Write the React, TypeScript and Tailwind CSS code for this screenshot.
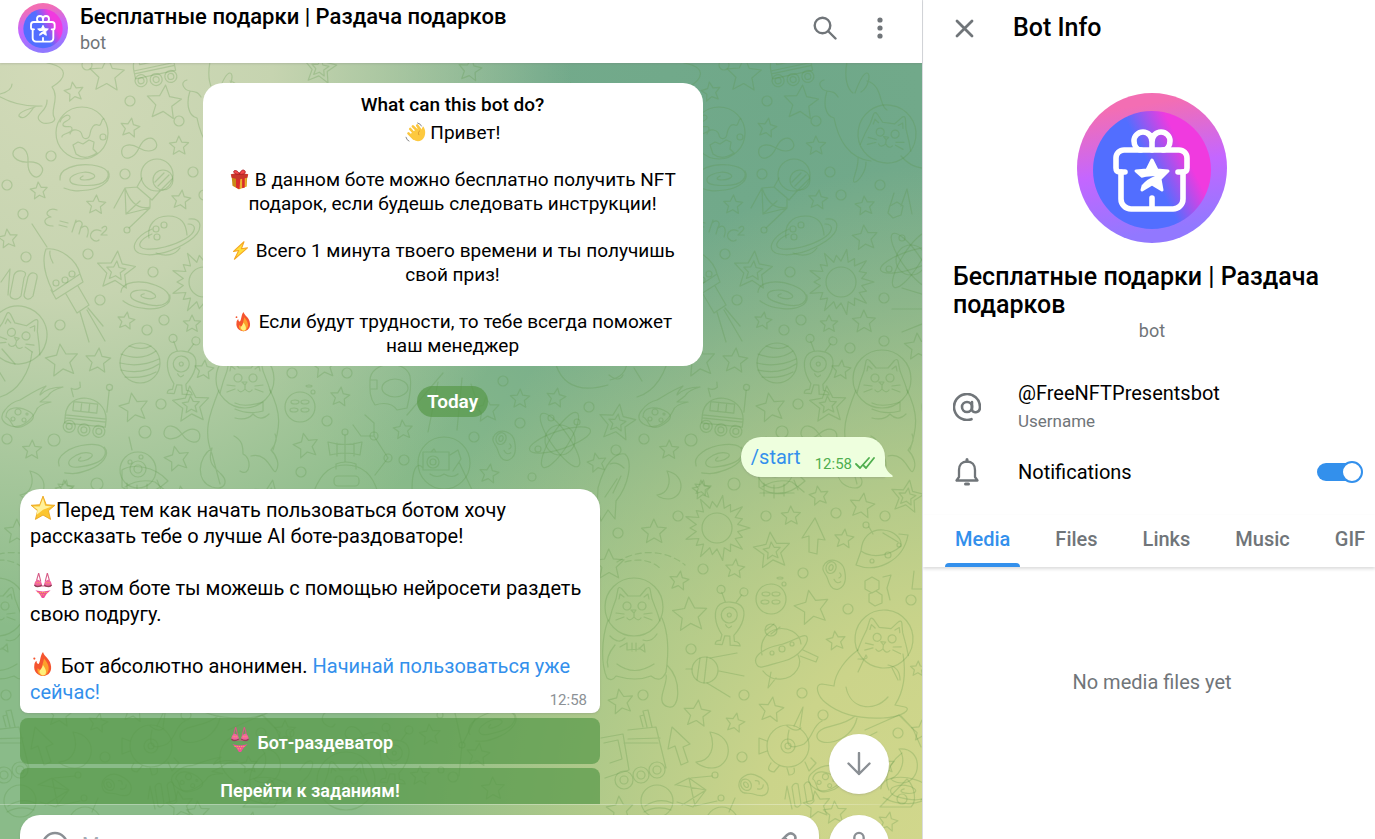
import { useId, useState } from 'react'

type Dot = [number, number, number]

const starDots: Dot[] = [
  [107, 75, 18], [74, 92, 10], [164, 103, 18], [130, 128, 10], [179, 146, 10], [39, 191, 9], [96, 205, 10],
  [181, 200, 10], [8, 239, 10], [116, 271, 20], [116, 271, 10], [126, 321, 9], [192, 324, 9], [62, 361, 17],
  [98, 361, 13], [204, 370, 10], [134, 408, 15], [191, 405, 19], [191, 405, 9], [32, 450, 10], [177, 459, 13],
  [65, 488, 8], [228, 206, 10], [228, 238, 13], [227, 322, 12], [281, 347, 14], [340, 397, 10], [403, 430, 10],
  [306, 446, 13], [489, 474, 10], [487, 410, 13], [520, 399, 10], [556, 398, 10], [617, 423, 19], [617, 423, 9],
  [597, 463, 10], [324, 366, 13], [320, 68, 17], [320, 68, 9], [470, 70, 12], [571, 95, 12],
  [65, 490, 10], [17, 532, 13], [-28, 565, 16], [42, 581, 10], [98, 569, 10], [154, 516, 10], [182, 496, 10],
  [225, 506, 13], [270, 497, 17], [270, 497, 9], [135, 551, 19], [135, 551, 9], [207, 539, 10], [175, 608, 18],
  [53, 615, 18], [199, 641, 10], [-16, 702, 13], [60, 714, 14], [98, 723, 10], [134, 710, 13], [198, 813, 12],
  [251, 822, 10], [-17, 810, 14], [281, 669, 8], [285, 731, 11], [249, 765, 9], [430, 735, 11], [478, 755, 12],
  [420, 776, 10], [493, 789, 12], [180, 805, 14],
]

const ringDots: Dot[] = [
  [130, 101, 5], [179, 121, 5], [51, 156, 5], [125, 174, 5], [193, 172, 5], [7, 185, 5], [23, 214, 5], [26, 257, 5],
  [88, 254, 5], [153, 272, 5], [100, 300, 5], [60, 325, 5], [147, 330, 5], [164, 320, 5], [161, 404, 5],
  [145, 432, 6], [7, 439, 5], [54, 440, 6], [97, 484, 6], [243, 185, 5], [204, 195, 5], [247, 298, 5],
  [247, 341, 5], [213, 348, 5], [292, 373, 5], [347, 373, 5], [327, 421, 5], [301, 472, 5], [404, 460, 5],
  [474, 437, 5], [503, 381, 5], [520, 423, 5], [616, 450, 5], [589, 407, 5], [532, 477, 4], [87, 65, 5],
  [41, 516, 5], [-19, 533, 5], [129, 516, 5], [199, 513, 5], [248, 516, 5], [66, 569, 5],
  [166, 573, 5], [211, 609, 5], [274, 600, 5], [54, 649, 5], [6, 695, 5], [107, 695, 5], [165, 693, 5],
  [186, 715, 5], [105, 757, 5], [261, 733, 5], [265, 799, 5], [453, 777, 5], [290, 733, 4],
]

function starPoints([cx, cy, r]: Dot) {
  const turn = (cx * 7 + cy * 3) % 24
  return Array.from({ length: 10 }, (_, i) => {
    const a = ((i * 36 - 90 + turn - 12) * Math.PI) / 180
    const d = i % 2 ? r * 0.47 : r
    return `${(cx + Math.cos(a) * d).toFixed(1)},${(cy + Math.sin(a) * d).toFixed(1)}`
  }).join(' ')
}

function sunPoints(cx: number, cy: number) {
  return Array.from({ length: 36 }, (_, i) => {
    const a = (i * 10 * Math.PI) / 180
    const d = i % 2 ? 21 : i % 4 ? 27 : 33
    return `${(cx + Math.cos(a) * d).toFixed(1)},${(cy + Math.sin(a) * d).toFixed(1)}`
  }).join(' ')
}

const at = (x: number, y: number, rotate = 0) => `translate(${x} ${y}) rotate(${rotate})`

const Galaxy = ({ x, y, r = 0 }: { x: number; y: number; r?: number }) => (
  <path
    transform={at(x, y, r)}
    d="M-24 3C-26-8-8-14 8-12S27-3 22 3 4 9-6 8-16 1-10-2 4-6 9-3 7 3 1 3-5 1-1-1M24-6C29 3 18 11 4 13S-14 13-20 11"
  />
)

const Infinity = ({ x, y, r = 0 }: { x: number; y: number; r?: number }) => (
  <path transform={at(x, y, r)} d="M0 0C8-9 17-8 18 0S8 9 0 0-17-8-18 0-8 9 0 0Z" />
)

const Alien = ({ x, y }: { x: number; y: number }) => (
  <g transform={at(x, y, 4)}>
    <path d="M-5 26h-7q0-4 5-4l1-6C-14 6-17-8-10-14c5-4 16-4 21 0 7 6 3 20-5 30l1 6q5 0 6 4H3l-1-9h-5zM-5-17l-4-9M6-17l5-8M-3 6q3 5 6 1" />
    <circle cx="-10" cy="-29" r="4" />
    <circle cx="13" cy="-28" r="4" />
    <circle cy="-4" r="8" />
    <circle r="2" cy="-4" />
  </g>
)

const Potato = ({ x, y, r = 0 }: { x: number; y: number; r?: number }) => (
  <g transform={at(x, y, r)}>
    <path d="M-12-7C-8-16 4-14 8-8S16 6 10 12-2 10-5 6-15 1-12-7ZM5-3q4 2 1 5M2 5q4 4 7 0" />
    <ellipse cx="-5" cy="-5" rx="5" ry="6" />
    <ellipse cx="-5" cy="-5" rx="2" ry="3" />
  </g>
)

const Cookie = ({ x, y }: { x: number; y: number }) => (
  <g transform={at(x, y)}>
    <circle r="15" />
    <ellipse cx="-5" cy="-5" rx="4" ry="2" />
    <ellipse cx="5" cy="-5" rx="4" ry="2" />
    <ellipse cx="-6" cy="3" rx="4" ry="2" />
    <ellipse cx="5" cy="3" rx="4" ry="2" />
    <ellipse cx="9" cy="-21" rx="3" ry="1" />
    <circle cx="13" cy="-15" r="2" />
  </g>
)

const CatFace = ({ x, y, r = 0 }: { x: number; y: number; r?: number }) => (
  <g transform={at(x, y, r)}>
    <circle r="29" />
    <path d="M-25 14C-22 2-20-3-18-8l2-10q1-3 4 0l6 7h12l6-7q3-3 4 0l2 10C20-3 23 4 26 14M-15-8l1-5 4 3M15-8l-1-5-4 3M-3 3h5l-2 3zM0 6v4q-4 5-7 1M0 10q4 5 7 1M-10 7l-8-1M-10 10l-8 3M10 7l8-1M10 10l8 3" />
    <circle cx="-7" cy="-1" r="4" />
    <circle cx="8" cy="-1" r="4" />
  </g>
)

const Rover = ({ x, y, r = 0 }: { x: number; y: number; r?: number }) => (
  <g transform={at(x, y, r)}>
    <path d="M-20 7C-20-18 18-18 21 7v8h-41zM-20 7h41M-20 10h41M-13-7h24v9h-24zM-5-7v9M3-7v9M21 0v-22M-14-12l-3-8q5 2 9-2l-1-5" />
    <circle cx="21" cy="-25" r="3" />
    <circle cx="-15" cy="18" r="6" /><circle cx="-15" cy="18" r="3" />
    <circle cx="0" cy="20" r="6" /><circle cx="0" cy="20" r="3" />
    <circle cx="15" cy="20" r="6" /><circle cx="15" cy="20" r="3" />
  </g>
)

const Comet = ({ x, y, r = 0 }: { x: number; y: number; r?: number }) => (
  <g transform={at(x, y, r)}>
    <path d="M-15-4Q-9-12 0-14C10-20 16-24 26-28q-5 5-6 9 8-8 23-8-12 3-15 9l-8 6h11q-14 3-15 9C10 8 0 15-9 12S-21 3-15-4Z" />
    <path d="M-14 3q0-8 8-9T10-2 7 10-8 10-14 3Z" />
    <circle cx="-2" cy="-2" r="3" /><circle cx="-7" cy="5" r="2" /><circle cx="4" cy="6" r="2" /><circle cx="7" cy="0" r="1" />
  </g>
)

const Atom = ({ x, y }: { x: number; y: number }) => (
  <g transform={at(x, y)}>
    <circle r="15" />
    <ellipse rx="32" ry="9" transform="rotate(-18)" />
    <ellipse rx="32" ry="9" transform="rotate(55)" />
    <ellipse rx="32" ry="9" transform="rotate(122)" />
    <circle cx="-9" cy="-22" r="3" /><circle cx="17" cy="-18" r="3" /><circle cx="-22" cy="9" r="3" />
  </g>
)

function Doodles() {
  return (
    <g>
      {starDots.map((s, i) => <polygon key={i} points={starPoints(s)} />)}
      {ringDots.map(([cx, cy, r], i) => <circle key={i} cx={cx} cy={cy} r={r} />)}

      {/* globe */}
      <circle cx="82" cy="133" r="26" />
      <path d="M60 122c2-6 9-9 10-5s-8 4-7 8 9-1 9 4-11 4-10 8M70 134c2-7 11-4 12 1s7 5 8-1 4-11 8-9 3-7 6-6M73 145l5-3 5 2 6-4 5 2-1 7 4 4q-12 8-21 1z" />
      <circle cx="103" cy="137" r="3" />
      <Infinity x={28} y={162} r={45} />
      <Infinity x={139} y={148} r={-18} />
      <Infinity x={182} y={434} r={8} />
      <Galaxy x={84} y={177} />
      <Galaxy x={145} y={295} r={14} />
      <Galaxy x={82} y={458} r={-12} />
      <Galaxy x={268} y={790} r={10} />

      {/* long-tailed cat floating past the top edge */}
      <path d="M-8 92C8 103 25 107 42 106M0 94q12-3 12-10M47 63c22 4 20 15 5 24 8 10-2 24 2 30s-11 9-15 3 9-9 8-20M35 107q-17 5-16 9 5 6 15-9" />
      <path d="M210 62c-3 15 0 27 6 31M218 93c4-11 8-20 12-20s2 14-6 19M230 81c16 4 12 26 20 29M187 80c-8 2-3 10 3 11 8 1 8 2 11 6M190 91c-4 12-2 25 7 27 4 21 15 41 37 43M221 157c1 12-7 24-4 25s12-9 12-20M264 156c10 12 23 14 35 11" />
      <CatFace x={250} y={134} r={8} />

      {/* satellite */}
      <circle cx="157" cy="175" r="16" />
      <circle cx="163" cy="180" r="10" />
      <path d="M155 182l9-9M158 186l11-11M162 189l10-10M142 178l-5 9 15 13 8-9M137 187l-12 1-11 20M125 188l1 26 24-6M150 199v8q-17 4-25-19M126 214l14-13M150 208l-21 20" />
      <circle cx="127" cy="230" r="3" />

      {/* ringed planet */}
      <path d="M149 238c-2-12 5-22 19-22s18 8 19 19M156 253c10 4 19 2 24-5" />
      <path d="M152 229c-18 8-24 22-10 25s32-3 47-13 14-24 0-22M152 234c-14 6-16 14-6 15s27-3 39-10 12-15 3-15" />
      <circle cx="156" cy="229" r="3" /><circle cx="164" cy="225" r="3" /><circle cx="157" cy="237" r="3" />

      {/* formula */}
      <path d="M57 210c-9-3-14 5-6 7-9 1-8 9 2 9M60 221l8 2M59 225l8 2M72 232l4-12M75 223c5-5 9 0 6 4l-2 7M81 228c6-5 9 1 6 9M101 231c-8-4-13 4-9 8s7 1 7 1M102 228c4-4 7 0 2 4l-3 3h6" />

      {/* rocket */}
      <path d="M32 224l15 23M46 249c-5 13 1 31 7 43l27-18c-3-14-20-27-34-25ZM53 263q-4-7-3-12M51 290l5 9 27-17-3-8M66 294l11 19 12-8-11-19M80 312l9 30M87 310l18 31M88 308l15 18" />
      <circle cx="56" cy="283" r="3" /><circle cx="65" cy="280" r="3" /><circle cx="72" cy="274" r="3" />

      <path d="M1 282l9-13-2 26M14 275q2-5 8-4t2 7l-3 18q-3 4-7 3t-4-4zM28 277q2-5 6-4t3 5l-4 18q-3 4-6 3t-3-4z" />

      {/* peeking cat */}
      <CatFace x={18} y={335} r={14} />
      <path d="M32 352c-2 20-14 40-32 45M2 349l13 15M-3 368l8 13" />
      <Comet x={20} y={414} />
      <Rover x={86} y={410} r={6} />
      <Rover x={152} y={60} r={-12} />

      {/* striped planet */}
      <circle cx="140" cy="363" r="20" />
      <path d="M129 346q13 5 22 0M121 354q20 8 35-3M120 363q20 5 39-4M121 370q22 5 38-6M125 377q18 2 31-5" />
      <Alien x={181} y={368} />
      <circle cx="204" cy="282" r="15" />
      <polygon points={sunPoints(204, 282)} />
      <Atom x={274} y={260} />
      <path d="M257 193l-4 13 7-4 6 4-2 9-8 3-5-5 2-8M264 206l6-17 5 25M265 288l33 10M255 309h40M265 332l30-12" />

      {/* grumpy cat */}
      <CatFace x={245} y={379} />
      <path d="M219 390c-10 25-16 42-7 64l8 30M270 390c12 24 10 38 3 60M235 403q10 5 28-1v9q-15 4-28-2M235 418q12 3 18-4 8 8 16 0M234 436c8 4 9 10 9 18 9 3 8 24-3 17M251 456c17-5 22 20 25 15 4-6 1-15-5-21 6-8 6-12 4-16M212 448c-14 9-17 33 0 39 14 4 16-6 9-13s-14-11-9-26" />
      <Cookie x={300} y={407} />

      {/* helmet */}
      <path d="M370 380c1-19 35-21 40-4 2 10 0 20-3 32l-10 2c-4-6-12-8-22-5-6-8-5-16-5-25ZM370 380h7v9h-7" />
      <ellipse cx="395" cy="388" rx="13" ry="9" />
      <path d="M443 373l-36 42M438 382l-10 50M462 378l-5 52M471 384l10 30" />
      <Potato x={504} y={445} r={20} />
      <Atom x={560} y={440} />

      {/* bathyscaphe and chain */}
      <path d="M314 491c8-20 18-26 32-26 16 0 27 10 32 28M328 442q17 5 34 0l-2 13q-15-4-30 0zM337 443v13M345 443v13M354 443v13M345 435v27M336 469v-5q10-4 20 0v5M353 425l8 11h13v-13l-9-8M374 436l14 22-13 17" />
      <rect x="334" y="476" width="25" height="10" rx="4" />
      <circle cx="345" cy="432" r="3" /><circle cx="374" cy="436" r="4" /><circle cx="388" cy="458" r="4" />
      <circle cx="444" cy="463" r="26" />
      <path d="M423 452h26v18h-26zM450 455l8-5 3 9-8 12M431 452l3-3 2 3M412 490c0-18 4-30 11-22M473 492l-14-30M430 474q7 5 14 0 8 5 14 0" />
      <circle cx="433" cy="462" r="6" /><circle cx="433" cy="462" r="3" />
      <path d="M556 365c7 20 24 28 52 20M610 380q15-3 17-17M609 375q10 8 14 0" />

      {/* bear astronaut */}
      <circle cx="138" cy="470" r="18" />
      <circle cx="138" cy="469" r="8" /><circle cx="138" cy="469" r="4" /><circle cx="130" cy="462" r="2" /><circle cx="141" cy="457" r="2" />
      <path d="M132 450l-3-13M125 487q14-9 30-5l12 10M123 493h34" />

      {/* shuttle */}
      <path d="M-39 488c7-26 18-36 27-34 8 7 4 31-9 47l-1 18-7-9-7 11-4-15zM-27 464q7-3 14 4M-24 493l8-17M-32 497l12-18" />
      <path d="M30 471c20 4 17 28 1 28-8 0-11-4-11-4 11-1 15-13 10-24Z" />
      <circle cx="80" cy="528" r="15" />
      <polygon points={sunPoints(80, 528)} />
      <path d="M122 470c9-6 32-5 46 11q-24 22-46 6zM127 483v13M137 485v13M147 484v12M157 480l4 10" />
      <path d="M172 552v-16l-7 2 13-20 10 22-7-1-1 15z" />

      {/* flying saucer */}
      <path d="M224 551c1-14 10-22 22-21s19 9 18 16c-9 8-27 14-40 5ZM224 551l-5 14c20 8 47-3 52-30l-9-1M246 533l15 9M232 527l4 7" />
      <circle cx="229" cy="525" r="3" /><circle cx="235" cy="561" r="2" /><circle cx="251" cy="555" r="3" /><circle cx="262" cy="545" r="2" />
      <Potato x={197} y={574} r={20} />
      <path d="M228 581l7-4 7 4v8l-7 4-7-4zM232 594l7-3 6 4v8l-7 3-6-4zM246 577l8-2-4 13 3 12M277 571l-2 18h18" />
      <Cookie x={134} y={599} />
      <Alien x={92} y={619} />

      {/* cat with a fish */}
      <path strokeDasharray="6 4" d="M-20 562c22-14 50-12 68 3M-12 562q22-6 36 7" />
      <CatFace x={-3} y={607} />
      <path d="M-29 620c-7 20-7 45-1 58q5 4 9-2 20 6 35 0 10 8 15-4c3-20 2-40-4-54M-22 645q-10 12-7 22M-20 664q17 13 37 0M-27 636q9 9 15 2M20 634q-6 9-14 6M-17 647l7-4v7l12-1 5-5 1 8-6-4M-5 643v8M-1 643v8M30 665c16 16 12 45 2 42-16-3 0-24-3-32" />
      <circle cx="68" cy="670" r="13" />
      <path d="M63 658l-3 22M70 657l-3 26M73 658l27-5M82 671l25 5M70 683l23 14M55 669h-6" />

      {/* space station */}
      <path d="M125 655c-3-14 5-24 15-26s23 3 24 15M120 665c-6-9 8-17 22-20s26-13 28-8-7 20-23 24-25 9-27 4ZM126 671c9 12 27 10 34-1 4-6 3-11 1-15M166 650l15 7-2 5-16-6M134 672l-3 16 8-10M129 630l8-6M134 634l9-7" />
      <circle cx="134" cy="630" r="6" /><circle cx="135" cy="653" r="2" /><circle cx="145" cy="649" r="3" /><circle cx="155" cy="644" r="2" />

      {/* dancing cat */}
      <CatFace x={247} y={639} r={6} />
      <path d="M221 650c-11 8-23 22-24 36l-12-2c-8 0-5 12 4 19 16 13 37 16 57 15s29-9 22-11l-10-2q13-20 8-51M209 687c4 22 28 26 42 10M251 665q12 2 12 15M255 668l6 12M221 659q12 1 8-4l-8 17M218 716c-13 12-35 8-38 19-2 13 34 10 40-17" />

      {/* truck */}
      <path d="M-36 738l22-4 6 36-24 8M-9 730l28-3 10 41M-9 739l32-1M-13 743h34M-33 743l14-3 4 19-12 4M6 727l-3-11 4-1 3 12M10 727l-4-16 5-1 4 17" />
      <circle cx="-13" cy="780" r="9" /><circle cx="-13" cy="780" r="4" /><circle cx="4" cy="775" r="8" /><circle cx="4" cy="775" r="4" /><circle cx="20" cy="770" r="8" /><circle cx="20" cy="770" r="4" />
      <path d="M44 765l-6-19-7 3 4-22 18 17-7 3 5 15z" />
      <path d="M73 732c27 4 21 36 2 36-11 0-16-6-16-6 15-1 20-15 14-30Z" />
      <path d="M262 749c25-2 23 34 3 34-8 0-11-4-11-4 12-6 15-21 8-30Z" />

      {/* submarine */}
      <circle cx="151" cy="746" r="21" />
      <circle cx="151" cy="746" r="7" /><circle cx="151" cy="746" r="3" />
      <path d="M130 741l-8-3v16l8-3M157 726l9-19-3 20M150 726q9 7 14 2M134 763q-6 8 3 9l5-6M150 768l2 7q7 0 5-7M168 762l4 9 7-8-5-5" />
      <Potato x={116} y={786} r={-35} />
      <path d="M148 799l2-13 5 23M155 787q2-5 6-3l3 20q-3 5-6 2zM167 785q3-5 6-2l4 18q-3 5-7 2z" />
      <circle cx="20" cy="801" r="16" />
      <path d="M8 806q14-9 27-3M7 812q13-7 27-2M38 785l14-7 17 12-13 17-16-5M52 778l6 28M40 785l29 5-24 15M54 778l21-2M58 806l22-5" />
      <circle cx="78" cy="775" r="3" /><circle cx="84" cy="798" r="3" />
      <circle cx="85" cy="823" r="16" />
      <path d="M92 812l6-14" />

      {/* middle part seen through the keyboard */}
      <path d="M152 730c-4 17 1 20 15 14 10-8 8-18 18-23M228 730l34-15 12 12M284 747l-8-18-12-13M331 712c-8-2-12 8-5 13s9-1 9-1" />
      <path d="M240 732c-27 12-25 36-5 50M265 753c-17 13-17 30-13 37" />
      <Comet x={190} y={779} r={12} />
      <CatFace x={346} y={781} />
      <Alien x={394} y={757} />
      <Infinity x={363} y={736} r={15} />
      <path d="M455 713l7 32 13-26M459 776l3-31M300 770c8-14 19-12 8 6L284 800" />
      <Galaxy x={492} y={725} r={-16} />
      <path d="M243 807l27-28c8 8 10 22 4 28z" />
      <circle cx="440" cy="715" r="3" /><circle cx="441" cy="770" r="3" /><circle cx="462" cy="745" r="3" />
    </g>
  )
}

function Wallpaper() {
  return (
    <div
      aria-hidden
      className="absolute inset-0 overflow-hidden bg-[#8abb89] bg-[radial-gradient(ellipse_56%_68%_at_6%_0%,#d2dab8_0%,#c6d4b0_42%,#c6d4b000_100%),radial-gradient(ellipse_66%_86%_at_104%_98%,#d3d88c_0%,#cbd48a_34%,#cbd48a00_100%),radial-gradient(ellipse_66%_66%_at_86%_4%,#6fa889_0%,#73aa8b_42%,#73aa8b00_100%)]"
    >
      <svg className="size-full" fill="none" stroke="#5a9444" strokeOpacity="0.26" strokeWidth="1.2" strokeLinejoin="round" strokeLinecap="round">
        <g transform="translate(0 -63)"><Doodles /></g>
        <g transform="translate(637 -63)"><Doodles /></g>
      </svg>
    </div>
  )
}

function GiftAvatar({ className }: { className: string }) {
  const id = useId()
  return (
    <svg viewBox="0 0 150 150" className={className} role="img" aria-label="Avatar">
      <defs>
        <linearGradient id={`${id}a`} x1="60" y1="0" x2="85" y2="150" gradientUnits="userSpaceOnUse">
          <stop offset="0.08" stopColor="#f36eb3" />
          <stop offset="0.5" stopColor="#c466ff" />
          <stop offset="0.92" stopColor="#9278ff" />
        </linearGradient>
        <linearGradient id={`${id}b`} x1="75" y1="79" x2="109" y2="62" gradientUnits="userSpaceOnUse">
          <stop stopColor="#526eff" />
          <stop offset="1" stopColor="#f03adf" />
        </linearGradient>
      </defs>
      <circle cx="75" cy="75" r="75" fill={`url(#${id}a)`} />
      <circle cx="75" cy="77" r="59" fill={`url(#${id}b)`} />
      <g fill="none" stroke="#fff" strokeWidth="5.6" strokeLinecap="round" strokeLinejoin="round">
        <path d="M48 79H43Q39 79 39 75V65a8 8 0 0 1 8-8h55a8 8 0 0 1 8 8v10q0 4-4 4h-5" />
        <path d="M44 79v27a10 10 0 0 0 10 10h42a10 10 0 0 0 10-10V79M75 105v11" />
        <path d="M75 57v-8c0-6-4-10-9-10s-9 4-9 9 3 9 7 9M75 57v-8c0-6 4-10 9-10s9 4 9 9-3 9-7 9" />
      </g>
      <path d="M75 67l5 10 11 1-8 8 2 11-10-6-10 6 3-11-9-8 11-1z" fill="#fff" stroke="#fff" strokeWidth="3" strokeLinejoin="round" />
      <path d="M60 86q9-3 18-3-8 3-13 9l-2-4z" fill="#526eff" />
    </svg>
  )
}

type EmojiName = 'wave' | 'gift' | 'zap' | 'fire' | 'star' | 'bikini'

const emojiArt: Record<EmojiName, React.ReactNode> = {
  wave: (
    <>
      <path d="M6 8l7 8M4 13l6 6M9 5l8 8M14 4l5 7" stroke="#fbc63d" strokeWidth="3" strokeLinecap="round" />
      <path d="M6 14l8-7 4 3c2-2 1-4 3-5 2 3 3 7 1 12-3 6-9 6-12 3z" fill="#fdc93f" />
      <path d="M17 10c-2 1-2 3-1 5" stroke="#d9942a" fill="none" />
      <path d="M14 1q4 1 5 4M1 17q1 4 4 5" stroke="#777" fill="none" />
    </>
  ),
  gift: (
    <>
      <path d="M3 8l18-1-1 13-9 3-7-4z" fill="#c98a17" />
      <path d="M11 10l9-2v12l-9 3z" fill="#eab02c" />
      <path d="M8 9l5 1-1 13-4-2zM15 9h3v12l-3 1z" fill="#d92b2b" />
      <path d="M2 6l10-2 10 2-1 4-10 2-8-2z" fill="#c9362c" />
      <path d="M12 6C7 7 4 3 6 2s5 1 6 4c1-4 4-6 6-4s-1 5-6 4z" fill="#f2494a" stroke="#a81c23" />
    </>
  ),
  zap: <path d="M16 2L4 13l6-1-5 10L20 9l-7 1z" fill="#ffe03a" stroke="#f5a623" strokeWidth="1.2" strokeLinejoin="round" />,
  fire: (
    <>
      <path d="M12 1c1 4 6 6 7 11 2 7-2 11-7 11S3 19 4 13c0-2 1-3 2-4 0 2 1 3 2 3 2-3 1-7 4-11z" fill="#f5552f" />
      <path d="M13 7c3 4 5 7 4 11-1 3-3 5-5 5s-6-2-5-7l3 2c1-3 2-7 3-11z" fill="#fda02b" />
      <path d="M12 13c2 3 4 6 2 9-2 1-4 0-5-2s2-3 3-7z" fill="#fff07c" />
      <circle cx="4" cy="7" r="1" fill="#f5552f" />
    </>
  ),
  star: (
    <>
      <path d="M12 1l3 8 8 .500-6 5 2 8-7-4-7 4 2-8-6-5L9 9z" fill="#fbc530" stroke="#e9a41d" strokeWidth="0.8" strokeLinejoin="round" />
      <path d="M12 3l2 7 6 .500-8 3-6 5 1-5-4-3h6z" fill="#fff19b" />
    </>
  ),
  bikini: (
    <>
      <path d="M8 0L6 7M8 0l2 8M16 0l-2 8M16 0l2 7M9 12h6" stroke="#d65b86" fill="none" />
      <path d="M7 6c3 1 4 3 4 5s-6 3-7 0c0-2 1-4 3-5zM17 6c-3 1-4 3-4 5s6 3 7 0c0-2-1-4-3-5z" fill="#f2639f" />
      <path d="M4 11q3 3 7 0M13 11q4 3 7 0" stroke="#8f4458" strokeWidth="1.2" fill="none" />
      <path d="M5 16q7 2 14 0-4 3-6 7h-2q-2-4-6-7z" fill="#ef519a" />
      <path d="M7 18h10M10 20h4M6 9h3M15 9h3" stroke="#f6c04a" strokeDasharray="1 1" />
    </>
  ),
}

const Emoji = ({ name, className = 'size-[21px]' }: { name: EmojiName; className?: string }) => (
  <svg viewBox="0 0 24 24" role="img" aria-label={name} className={`-my-1 inline-block align-[0px] ${className}`}>
    {emojiArt[name]}
  </svg>
)

function ChatHeader() {
  return (
    <header className="relative z-10 flex h-[63px] shrink-0 items-center bg-white pl-[18px] pr-[22px] shadow-[0_1px_2px_#72727240]">
      <GiftAvatar className="-mt-2 mr-3 size-[50px] shrink-0" />
      <div className="-mt-1.5 min-w-0 flex-1">
        <h1 className="truncate text-[22px] leading-7 font-medium text-black">Бесплатные подарки | Раздача подарков</h1>
        <p className="text-lg leading-6 text-[#707579]">bot</p>
      </div>
      <div className="-mt-2 flex items-center gap-[15px] text-[#707579]">
        <button aria-label="Search" className="flex size-10 items-center justify-center">
          <svg viewBox="0 0 24 24" className="size-6" fill="none" stroke="currentColor" strokeWidth="2.400" strokeLinecap="round">
            <circle cx="9.500" cy="9.500" r="7.800" />
            <path d="M15.500 15.500l7 7" />
          </svg>
        </button>
        <button aria-label="More actions" className="flex size-10 items-center justify-center">
          <svg viewBox="0 0 24 24" className="size-6" fill="currentColor">
            <circle cx="12" cy="4" r="2.600" />
            <circle cx="12" cy="12" r="2.600" />
            <circle cx="12" cy="20" r="2.600" />
          </svg>
        </button>
      </div>
    </header>
  )
}

function BotIntro() {
  return (
    <section className="mx-auto w-[500px] rounded-[20px] bg-white px-5 pt-[10px] pb-2 text-center text-[19px] leading-6 text-black">
      <h2 className="mb-1 font-medium">What can this bot do?</h2>
      <p><Emoji name="wave" /> Привет!</p>
      <p className="mt-[23px]"><Emoji name="gift" /> В данном боте можно бесплатно получить NFT<br />подарок, если будешь следовать инструкции!</p>
      <p className="mt-[23px]"><Emoji name="zap" /> Всего 1 минута твоего времени и ты получишь<br />свой приз!</p>
      <p className="mt-[23px]"><Emoji name="fire" /> Если будут трудности, то тебе всегда поможет<br />наш менеджер</p>
    </section>
  )
}

function Composer() {
  return (
    <footer className="relative flex shrink-0 gap-[10px] pt-[11px] pr-[33px] pb-5 pl-5">
      <div className="absolute inset-x-0 top-0 h-px bg-linear-to-r from-white/30 via-white/30 via-90% to-transparent" />
      <div className="flex h-[60px] flex-1 items-center rounded-[20px] bg-white px-5 text-[#8a8f94] shadow-[0_1px_2px_#72727240]">
        <button aria-label="Emoji" className="size-[30px]">
          <svg viewBox="0 0 30 30" fill="none" stroke="currentColor" strokeWidth="2.500" strokeLinecap="round">
            <circle cx="15" cy="15" r="12" />
            <path d="M10 18q5 5 10 0M11 11v1M19 11v1" />
          </svg>
        </button>
        <input aria-label="Message" placeholder="Message" className="mx-3 min-w-0 flex-1 text-xl outline-none placeholder:text-[#a2acb4]" />
        <button aria-label="Attach" className="size-[30px]">
          <svg viewBox="0 0 30 30" fill="none" stroke="currentColor" strokeWidth="2.500" strokeLinecap="round">
            <path d="M9 14l9-9c5-4 11 1 7 6L14 24c-4 4-10-1-6-6l9-9" />
          </svg>
        </button>
      </div>
      <button aria-label="Record voice" className="flex size-[60px] items-center justify-center rounded-full bg-white text-[#8a8f94] shadow-[0_1px_2px_#72727240]">
        <svg viewBox="0 0 30 30" className="size-7" fill="none" stroke="currentColor" strokeWidth="2.500" strokeLinecap="round">
          <rect x="10" y="2" width="10" height="16" rx="5" />
          <path d="M6 14c0 12 18 12 18 0M15 23v5" />
        </svg>
      </button>
    </footer>
  )
}

function Chat() {
  return (
    <main className="relative flex h-[calc(100vh+56px)] min-w-0 flex-1 flex-col">
      <ChatHeader />
      <div className="relative flex min-h-0 flex-1 flex-col">
        <Wallpaper />
        <div className="relative flex min-h-0 flex-1 flex-col overflow-hidden pt-5 pr-[37px] pl-5">
          <BotIntro />
          <time className="mx-auto mt-[20px] shrink-0 rounded-full bg-[#579849b3] px-[10px] py-[3px] text-[19px] leading-[25px] font-semibold text-white">Today</time>

          <div className="relative mt-5 ml-auto flex h-10 shrink-0 items-center rounded-[20px] rounded-br-none bg-[#eeffde] pr-[10px] pl-[10px] shadow-[0_1px_2px_#72727240]">
            <svg viewBox="0 0 9 20" className="absolute right-[-8px] bottom-0 h-5 w-[9px]" fill="#eeffde">
              <path d="M0 0c0 8 2 14 8 18 1 1 1 2 0 2H0z" />
            </svg>
            <a href="#start" className="mr-[14px] text-xl text-[#3390ec]">/start</a>
            <span className="mt-[13px] text-[15px] leading-5 text-[#4fae4e]">12:58</span>
            <svg viewBox="0 0 20 12" className="mt-3 ml-[3px] h-3 w-5" fill="none" stroke="#4fae4e" strokeWidth="1.800" strokeLinecap="round" strokeLinejoin="round" aria-label="Read" role="img">
              <path d="M1 7l4 4 9-10M9 9l2 2 8-10" />
            </svg>
          </div>

          <article className="relative mt-3 w-[580px] shrink-0 rounded-[20px] rounded-b-lg bg-white px-[10px] py-2 text-[20px] leading-[26px] text-black shadow-[0_1px_2px_#72727240]">
            <p><Emoji name="star" className="size-[26px]" />Перед тем как начать пользоваться ботом хочу<br />рассказать тебе о лучше AI боте-раздоваторе!</p>
            <p className="mt-[26px]"><Emoji name="bikini" className="size-[26px]" /> В этом боте ты можешь с помощью нейросети раздеть<br />свою подругу.</p>
            <p className="mt-[26px]">
              <Emoji name="fire" className="size-[26px]" /> Бот абсолютно анонимен.{' '}
              <a href="#more" className="text-[#3390ec]">Начинай пользоваться уже<br />сейчас!</a>
            </p>
            <time className="absolute right-[13px] bottom-1 text-[15px] leading-[18px] text-[#8c9196]">12:58</time>
          </article>
          <div className="mt-[5px] flex w-[580px] shrink-0 flex-col gap-1 text-lg font-semibold text-white">
            <button className="h-[46px] rounded-lg bg-[#579849b3] pt-1"><Emoji name="bikini" className="size-[26px]" /> Бот-раздеватор</button>
            <button className="h-[46px] rounded-lg bg-[#579849b3]">Перейти к заданиям!</button>
          </div>
        </div>
        <Composer />
        <button aria-label="Go to bottom" className="absolute right-[33px] bottom-[101px] flex size-[60px] items-center justify-center rounded-full bg-white text-[#8a8f94] shadow-[0_1px_2px_#72727240]">
          <svg viewBox="0 0 24 24" className="size-6" fill="none" stroke="currentColor" strokeWidth="2.400" strokeLinecap="round" strokeLinejoin="round">
            <path d="M12 1v21M1.500 11.500L12 22l10.500-10.500" />
          </svg>
        </button>
      </div>
    </main>
  )
}

const tabs = ['Media', 'Files', 'Links', 'Music', 'GIF']

function BotInfo() {
  const [tab, setTab] = useState('Media')
  const [notify, setNotify] = useState(true)
  return (
    <aside className="flex w-[453px] shrink-0 flex-col overflow-hidden border-l border-[#dadce0] bg-white">
      <div className="flex h-14 shrink-0 items-center pl-[31px]">
        <button aria-label="Close" className="mr-[38px] size-[21px] text-[#707579]">
          <svg viewBox="0 0 21 21" fill="none" stroke="currentColor" strokeWidth="2.800" strokeLinecap="round">
            <path d="M3 3l15 15M18 3L3 18" />
          </svg>
        </button>
        <h2 className="text-[25px] leading-8 font-medium text-black">Bot Info</h2>
      </div>

      <div className="pt-[37px] pr-6 pl-[30px]">
        <GiftAvatar className="mx-auto size-[150px]" />
        <h3 className="mt-5 text-[25px] leading-7 font-medium text-black">Бесплатные подарки | Раздача подарков</h3>
        <p className="text-center text-lg leading-6 text-[#707579]">bot</p>
      </div>

      <div className="mt-9 flex items-center pr-3 pl-[30px]">
        <svg viewBox="0 0 28 28" className="mr-[37px] size-7" fill="none" stroke="#707579" strokeWidth="2.600" strokeLinecap="round">
          <circle cx="14" cy="14" r="5" />
          <path d="M19 9v7.500c0 4 8 4 8-2.500A13 13 0 1 0 18.500 26.200" />
        </svg>
        <div>
          <p className="text-xl leading-7 text-black">@FreeNFTPresentsbot</p>
          <p className="text-[17px] leading-7 text-[#707579]">Username</p>
        </div>
      </div>

      <label className="mt-[23px] flex items-center pr-3 pl-[30px]">
        <svg viewBox="0 0 28 28" className="mr-[37px] size-7" fill="none" stroke="#707579" strokeWidth="2.300" strokeLinecap="round" strokeLinejoin="round">
          <path d="M3.500 22.500h21l-2.500-3.500V12c0-5-3-8.500-8-8.500S6 7 6 12v7z" />
          <path d="M14 1.500v2M12.500 26h3" strokeWidth="3" />
        </svg>
        <span className="flex-1 text-xl leading-7 text-black">Notifications</span>
        <span className="relative flex h-[22px] w-[46px] items-center">
          <input type="checkbox" checked={notify} onChange={e => setNotify(e.target.checked)} className="peer h-[18px] w-10 appearance-none rounded-full bg-[#c4c9cc] checked:bg-[#3390ec]" />
          <span className="pointer-events-none absolute left-0 size-[22px] rounded-full border-2 border-[#c4c9cc] bg-white peer-checked:left-6 peer-checked:border-[#3390ec]" />
        </span>
      </label>

      <div role="tablist" className="relative mt-[29px] flex h-[52px] shrink-0 gap-[25px] pl-[22px] shadow-[0_2px_3px_#72727240]">
        {tabs.map(t => (
          <button
            key={t}
            role="tab"
            aria-selected={t === tab}
            onClick={() => setTab(t)}
            className={`relative shrink-0 px-[10px] pb-1 text-xl font-medium ${
              t === tab
                ? 'text-[#3390ec] after:absolute after:inset-x-0 after:bottom-0 after:h-1 after:rounded-t after:bg-[#3390ec]'
                : 'text-[#707579]'
            }`}
          >
            {t}
          </button>
        ))}
      </div>
      <p className="mt-[101px] pr-6 pl-[30px] text-center text-xl leading-7 text-[#707579]">No media files yet</p>
    </aside>
  )
}

export default function App() {
  return (
    <div className="flex h-screen overflow-hidden bg-white font-['Roboto','Noto_Sans',sans-serif]">
      <Chat />
      <BotInfo />
    </div>
  )
}
